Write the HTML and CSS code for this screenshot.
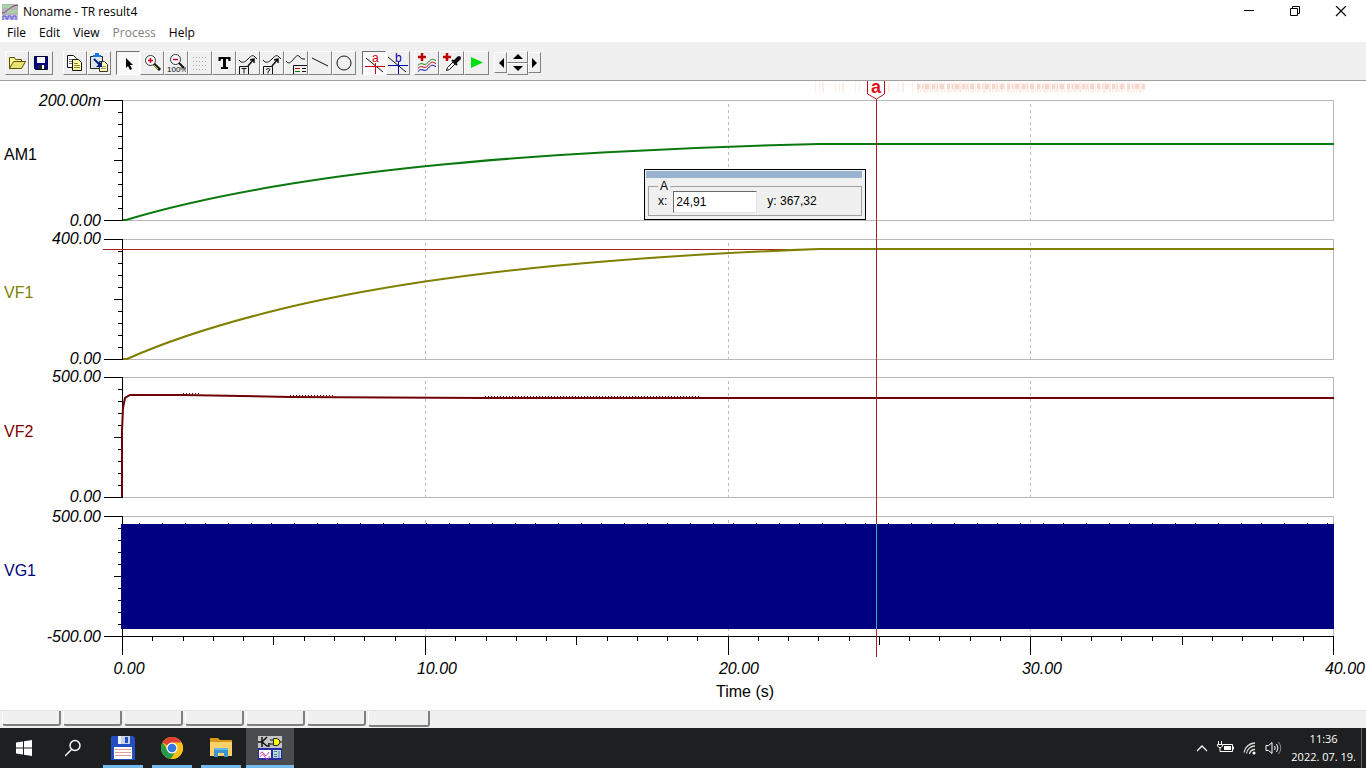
FILE: index.html
```html
<!DOCTYPE html>
<html lang="en">
<head>
<meta charset="utf-8">
<title>Noname - TR result4</title>
<link rel="stylesheet" href="styles.css">
</head>
<body>
<div class="app">
  <header class="titlebar">
    <svg class="app-icon" width="16" height="16" viewBox="0 0 16 16" aria-hidden="true"><path fill="#b5b5b5" d="M0 0h16v16H0z"/><path fill="#a9d3a4" d="M0 1h10v3H0zM5 6h11v3H5z"/><path d="M0 9c5 0 7-7 16-8" fill="none" stroke="#8a3f7a"/><path d="M0 11h16v5H0z" fill="#c9c5ee"/><path d="M1 16v-4h3v3h2v-3h3v3h2v-3h3v4" fill="none" stroke="#5b50c8"/></svg>
    <h1 class="title">Noname - TR result4</h1>
    <div class="window-controls">
      <button class="win-btn" aria-label="Minimize"><svg width="12" height="12"><path d="M1 4.500h10" stroke="#000"/></svg></button>
      <button class="win-btn" aria-label="Restore"><svg width="12" height="12" fill="none" stroke="#000"><path d="M1.500 2.500h7v7h-7zM3.500 2.500v-2h7v7h-2"/></svg></button>
      <button class="win-btn" aria-label="Close"><svg width="12" height="12"><path d="M1 0l10 10M11 0L1 10" stroke="#000" stroke-width="1.200"/></svg></button>
    </div>
  </header>
  <nav class="menubar" aria-label="Main menu">
    <button>File</button><button>Edit</button><button>View</button><button disabled>Process</button><button>Help</button>
  </nav>
  <div class="toolbar" role="toolbar" aria-label="Tools">
    <div class="group files">
      <button class="tool" aria-label="Open"><svg width="20" height="20"><path d="M2.500 15.500v-11h5l1 2h6v2" fill="#ffff9a" stroke="#5d5000"/><path d="M2.500 15.500l4-7h12l-4 7z" fill="#e8e270" stroke="#5d5000"/></svg></button>
      <button class="tool" aria-label="Save"><svg width="20" height="20"><path d="M3.500 3.500h13v13h-12l-1-1z" fill="#000090" stroke="#000030"/><path d="M6 4h8v6H6z" fill="#f4f4f4"/><path d="M7 12h7v4H7z" fill="#222"/><path d="M11 12h2v4h-2z" fill="#fff"/></svg></button>
    </div>
    <div class="group clip">
      <button class="tool" aria-label="Copy"><svg width="20" height="20"><path d="M2.500 2.500h6l3 3v9h-9z" fill="#fff" stroke="#111"/><path d="M4 6.500h4M4 8.500h4M4 10.500h3" stroke="#777"/><path d="M7.500 6.500h6l3 3v8h-9z" fill="#ffffa8" stroke="#111"/><path d="M9 10.500h4M9 12.500h6M9 14.500h6" stroke="#888830"/></svg></button>
      <button class="tool" aria-label="Paste"><svg width="20" height="20"><path d="M1.500 3.500h12v12h-12z" fill="#dfe6ee" stroke="#222"/><path d="M4 4V2h2V0h4v2h2v2z" fill="#1979e0"/><path d="M10.500 8.500h5l3 3v7h-8z" fill="#ffffa8" stroke="#333"/><path d="M12 13.500h5M12 15.500h5" stroke="#999"/><path d="M5 6l6 6" stroke="#002080" stroke-width="2"/><path d="M13 8v6H7z" fill="#002080"/></svg></button>
    </div>
    <div class="group draw">
      <button class="tool pressed" aria-label="Select"><svg width="20" height="20"><path d="M8 5v10l2-2 2 4 2-1-2-4h3z" fill="#000"/></svg></button>
      <button class="tool" aria-label="Zoom in"><svg width="20" height="20"><circle cx="8.500" cy="7.500" r="5" fill="#fff" stroke="#333"/><path d="M6 7.500h5M8.500 5v5" stroke="#d00022" stroke-width="1.500"/><path d="M12 11l6 6" stroke="#111" stroke-width="3"/><path d="M12 12l4 4" stroke="#dddd40"/></svg></button>
      <button class="tool" aria-label="Zoom 100%"><svg width="20" height="20"><circle cx="9.500" cy="6.500" r="5" fill="#fff" stroke="#333"/><path d="M7 6.500h5" stroke="#d00022" stroke-width="1.500"/><path d="M13 10l5 5" stroke="#111" stroke-width="2"/><text x="1" y="19" class="icon-tiny">100%</text></svg></button>
      <button class="tool" aria-label="Grid"><svg width="20" height="20"><path d="M3 4.500h14M3 8.500h14M3 12.500h14M3 16.500h14" stroke="#aaa" stroke-dasharray="1 2"/></svg></button>
      <button class="tool" aria-label="Text"><svg width="20" height="20"><path d="M4.500 4h12v4h-2l-.5-2h-2v8h2v2h-7v-2h2V6H7l-.5 2h-2z" fill="#000"/></svg></button>
      <button class="tool" aria-label="Curve label"><svg width="22" height="22" fill="none" stroke="#111"><path d="M2 8c3 4 6 2 9-1s4-4 6-3l3 3M2.500 22v-7.500h9V22M4.500 16.500h5M7 16.500v5"/><path d="M11 14l6-7m-4 1l4-1v4" stroke-width="1.500"/></svg></button>
      <button class="tool" aria-label="Curve query"><svg width="22" height="22" fill="none" stroke="#111"><path d="M2 8c3 4 6 2 9-1s4-4 6-3l3 3M2.500 22v-7.500h9V22M5 17.500q2-2 4 0 0 1-2 2v2"/><path d="M11 14l6-7m-4 1l4-1v4" stroke-width="1.500"/></svg></button>
      <button class="tool" aria-label="Legend"><svg width="22" height="22" fill="none" stroke="#111"><path d="M1 9c5 7 9-8 13-5 2 3 3 3 6 3M8.500 22v-8.500H22"/><path d="M10 16.500h5" stroke="#b00"/><path d="M10 19.500h5" stroke="#070"/><path d="M17 16.500h4M17 19.500h4"/></svg></button>
      <button class="tool" aria-label="Line"><svg width="20" height="20"><path d="M2 5l16 8" stroke="#111"/></svg></button>
      <button class="tool" aria-label="Circle"><svg width="20" height="20"><circle cx="10" cy="10" r="7" fill="none" stroke="#111"/></svg></button>
    </div>
    <div class="group cursors">
      <button class="tool pressed" aria-label="Cursor a"><svg width="22" height="22"><path d="M3 6l17 14" stroke="#111"/><path d="M2 14.500h20M12.500 11v11" stroke="#d00010"/><text x="9" y="10" class="icon-letter red">a</text></svg></button>
      <button class="tool" aria-label="Cursor b"><svg width="22" height="22"><path d="M1 5l18 15" stroke="#111"/><path d="M1 13.500h20M11.500 10v12" stroke="#0000a8"/><text x="8" y="10" class="icon-letter blue">b</text></svg></button>
    </div>
    <div class="group run">
      <button class="tool wide" aria-label="Add curve"><svg width="22" height="22" fill="none"><path d="M6 1v8M2 5h8" stroke="#b00" stroke-width="2.500"/><path d="M2 13.500c4-5 6 2 10-3s5-3 8-2" stroke="#188018"/><path d="M2 16.500c4-5 6 2 10-3s5-3 8-2" stroke="#c00010"/><path d="M2 19.500c4-5 6 2 10-3s5-3 8-2" stroke="#0000b0"/></svg></button>
      <button class="tool wide" aria-label="Pick curve"><svg width="22" height="22"><path d="M6 1v8M2 5h8" stroke="#b00" stroke-width="2.500"/><path d="M5.500 18.500l1-3 6-6 2 2-6 6z" fill="#fff" stroke="#111"/><path d="M11 8l5 5" stroke="#111" stroke-width="2"/><path d="M14 10l4-4" stroke="#111" stroke-width="4" stroke-linecap="round"/></svg></button>
      <button class="tool wide" aria-label="Run"><svg width="20" height="20"><path d="M4 4l12 5.500L4 15z" fill="#00e010"/></svg></button>
    </div>
    <div class="group scroll">
      <button class="tool slim" aria-label="Previous"><svg width="8" height="10"><path d="M7 0v10L2 5z"/></svg></button>
      <div class="spin">
        <button class="tool half" aria-label="Up"><svg width="10" height="6"><path d="M0 5h10L5 0z"/></svg></button>
        <button class="tool half" aria-label="Down"><svg width="10" height="6"><path d="M0 0h10L5 5z"/></svg></button>
      </div>
      <button class="tool slim" aria-label="Next"><svg width="8" height="10"><path d="M1 0v10l5-5z"/></svg></button>
    </div>
  </div>

  <main class="chart">
    <svg class="plot" viewBox="0 81 1366 629" role="img" aria-label="Transient analysis curves">
      <defs>
        <path id="axis" d="M104 .5h18M122.500 0v121M104 120.500h18M118 12.500h4M118 24.500h4M118 36.500h4M118 48.500h4M114 60.500h8M118 72.500h4M118 84.500h4M118 96.500h4M118 108.500h4"/>
        <path id="frame" d="M123 .5h1210.500v120H123"/>
        <path id="grid" d="M425.500 4v117M728.500 4v117M1030.500 4v117"/>
      </defs>
      <g class="ghost">
        <path d="M815 87.500h46" stroke-dasharray="1 3 1 2 2 11"/>
        <path d="M888 87.500h28" stroke-dasharray="2 8 1 3"/>
        <path d="M917 87.500h228" stroke-dasharray="2 1 1 2 3 1 1 1"/>
        <path class="ghost-mid" d="M917 86.500h228" stroke-dasharray="3 2 1 2 4 3"/>
      </g>
      <g class="frames">
        <use href="#frame" y="100"/><use href="#frame" y="239"/><use href="#frame" y="377"/><use href="#frame" y="516"/>
      </g>
      <g class="grids">
        <use href="#grid" y="100"/><use href="#grid" y="239"/><use href="#grid" y="377"/><use href="#grid" y="516"/>
      </g>
      <g class="axes">
        <use href="#axis" y="100"/><use href="#axis" y="239"/><use href="#axis" y="377"/><use href="#axis" y="516"/>
        <path d="M122 636.500h1212M122.500 636v19M425.500 636v19M728.500 636v19M1030.500 636v19M1333.500 636v19"/>
        <path d="M273.500 637v8M576.500 637v8M879.500 637v8M1182.500 637v8"/>
        <path d="M152.500 637v4M183.500 637v4M213.500 637v4M243.500 637v4M304.500 637v4M334.500 637v4M364.500 637v4M395.500 637v4M455.500 637v4M486.500 637v4M516.500 637v4M546.500 637v4M607.500 637v4M637.500 637v4M667.500 637v4M697.500 637v4M758.500 637v4M788.500 637v4M818.500 637v4M849.500 637v4M909.500 637v4M939.500 637v4M970.500 637v4M1000.500 637v4M1061.500 637v4M1091.500 637v4M1121.500 637v4M1152.500 637v4M1212.500 637v4M1242.500 637v4M1272.500 637v4M1303.500 637v4"/>
      </g>
      <rect class="level" x="103" y="249" width="685" height="1"/>
      <g class="curves">
        <path class="am1" d="M123 220h3C173 205.800 224 195.200 274 186.600S375 171.500 425 166.300 546 155.600 607 152.200 748 145.500 819 144H1334"/>
        <path class="vf1" d="M123 359h4C173 338.500 224 323.200 274 310.800S375 289.100 425 281.600 546 266.100 607 261.200 748 251.600 819 249H1334"/>
        <path class="vf2" d="M122 497V431L123 408 125 398 130 395H183L290 397 485 398H1334"/>
      </g>
      <path class="vf2-dots" d="M183 394.500h18M290 396.500h45M485 397.500h215"/>
      <path class="vg1" d="M121 524h1213v105H121z"/>
      <path class="vg1-dots" d="M139 523.500h1195"/>
      <path class="cursor" d="M876.500 99v558"/>
      <path class="cursor-inverse" d="M876.500 524v105"/>
      <path class="marker" d="M867.500 81v13l9 5 8-5V81"/>
      <text class="marker-text" x="876" y="93">a</text>
      <g class="y-label">
        <text x="101" y="106">200.00m</text><text x="101" y="226">0.00</text>
        <text x="101" y="244">400.00</text><text x="101" y="364">0.00</text>
        <text x="101" y="382">500.00</text><text x="101" y="502">0.00</text>
        <text x="101" y="522">500.00</text><text x="101" y="642">-500.00</text>
      </g>
      <g class="x-label">
        <text x="129" y="674">0.00</text><text x="437" y="674">10.00</text><text x="739" y="674">20.00</text><text x="1042" y="674">30.00</text><text x="1345" y="674">40.00</text>
      </g>
      <text class="axis-title" x="745" y="697">Time (s)</text>
      <g class="name">
        <text class="name-am1" x="4" y="160">AM1</text><text class="name-vf1" x="4" y="298">VF1</text><text class="name-vf2" x="4" y="437">VF2</text><text class="name-vg1" x="4" y="576">VG1</text>
      </g>
    </svg>
    <section class="readout" aria-label="Cursor A">
      <div class="readout-bar"></div>
      <fieldset class="readout-box">
        <legend>A</legend>
        <label for="cursor-x">x:</label>
        <input id="cursor-x" type="text" value="24,91">
        <span class="readout-y">y: 367,32</span>
      </fieldset>
    </section>
  </main>

  <div class="tabs" role="tablist">
    <button class="tab" role="tab" aria-label="Result 1"></button><button class="tab" role="tab" aria-label="Result 2"></button><button class="tab" role="tab" aria-label="Result 3"></button><button class="tab" role="tab" aria-label="Result 4"></button><button class="tab" role="tab" aria-label="Result 5"></button><button class="tab" role="tab" aria-label="Result 6"></button><button class="tab selected" role="tab" aria-selected="true" aria-label="Result 7"></button>
  </div>

  <footer class="taskbar">
    <button class="task" aria-label="Start"><svg width="18" height="18" fill="#fff"><path d="M0 3.500l7-1V8.500H0zM8 2.300L16 1v7.500H8zM0 9.500h7v6l-7-1zM8 9.500h8V17l-8-1.300z"/></svg></button>
    <button class="task" aria-label="Search"><svg width="18" height="18" fill="none" stroke="#fff" stroke-width="1.400"><circle cx="10" cy="6.500" r="5"/><path d="M6.500 10.500L0 17"/></svg></button>
    <button class="task open" aria-label="File manager"><svg width="24" height="24"><path d="M1 0h21l2 2v22H0V1z" fill="#244fc4"/><path d="M7 0h12v8H7z" fill="#c8d4e4"/><path d="M14 1h3v6h-3z" fill="#244fc4"/><path d="M7 0h3v8H7z" fill="#edf2fa"/><path d="M3 11h18v12H3z" fill="#fff"/><path d="M4 13.500h16M4 16.500h16M4 19.500h16" stroke="#e29a9a"/></svg></button>
    <button class="task open" aria-label="Chrome"><svg width="24" height="24"><circle cx="12" cy="12" r="11" fill="#fbc116"/><path d="M12 12L2.500 6.500A11 11 0 0 1 21.500 6.500z" fill="#de4034"/><path d="M2.500 6.500A11 11 0 0 0 11 23l5.500-9.500L7 13z" fill="#279a4b"/><path d="M12 6.500h9.500A11 11 0 0 1 11 23l6-9z" fill="#fbc116"/><circle cx="12" cy="12" r="5.500" fill="#fff"/><circle cx="12" cy="12" r="4.300" fill="#3478e5"/></svg></button>
    <button class="task open" aria-label="File Explorer"><svg width="24" height="22"><path d="M1 1h8l2 2h12v4H1z" fill="#d99a1c"/><path d="M1 5h22v14H1z" fill="#fbd267"/><path d="M5 20v-9h14v9h-4v-4H9v4z" fill="#3b95d0"/><path d="M5 11h14v2H5z" fill="#65b9e8"/></svg></button>
    <button class="task open active" aria-label="TINA"><svg width="24" height="24"><path d="M0 0h24v12H0z" fill="#c4c4c4"/><path d="M0 6h4M4 1v10M4 6l5-5M4 6l5 4M8 10h3V7" fill="none" stroke="#111" stroke-width="1.500"/><path d="M12 4h4M12 8h4M21 6h3" stroke="#111"/><path d="M15.500 2.500H19q3 1 3 3.500t-3 3.500h-3.500z" fill="#ff0" stroke="#222"/><path d="M0 12h24v12H0z" fill="#2828a0"/><path d="M1 14h12v8H1z" fill="#fff"/><path d="M2 18q2-4 4 0t5-2M2 21q3-5 5 0t5-1" fill="none" stroke="#c044b0"/><path d="M15 14h8v8h-8z" fill="#b8dcdc"/><path d="M16 15.500h3M16 18.500h3M16 20.500h3M21 15v7" stroke="#5070a8"/></svg></button>
    <div class="tray">
      <button class="tray-btn" aria-label="Show hidden icons"><svg width="12" height="8" fill="none" stroke="#fff" stroke-width="1.300"><path d="M1 7l5-5 5 5"/></svg></button>
      <button class="tray-btn" aria-label="Battery"><svg width="17" height="14" fill="none" stroke="#fff"><path d="M6 3.500h9.500v7H4.500M16.500 5.500v3M1.500 0v3M4.500 0v3M.5 3.500h5v1.500l-1.500 1.500H2L.5 5zM3 6.500v4h2"/><path d="M7 5h7v4H7z" fill="#fff" stroke="none"/></svg></button>
      <button class="tray-btn" aria-label="Network"><svg width="13" height="14" fill="none"><path d="M1 11.500A11 11 0 0 1 12 2M3.500 12.500A8.500 8.500 0 0 1 12 5M6.500 13A5.500 5.500 0 0 1 12 8.500" stroke="#ddd" stroke-width="1.300"/><circle cx="11" cy="12" r="1.500" fill="#fff"/></svg></button>
      <button class="tray-btn" aria-label="Volume"><svg width="17" height="14" fill="none" stroke="#fff"><path d="M1 4.500h2.500l3.500-3v11l-3.500-3H1zM9.500 5q1.500 2 0 4M11.500 3q3 4 0 8"/><path d="M13.500 1q4.500 6 0 12" stroke="#888"/></svg></button>
      <button class="clock"><time>11:36</time><time>2022. 07. 19.</time></button>
      <span class="peek"></span>
    </div>
  </footer>
</div>
</body>
</html>
```
FILE: styles.css
```css
* { box-sizing: border-box; }
body { margin: 0; background: #fff; color: #000; font-family: "Open Sans", "Noto Sans", sans-serif; font-size: 12px; }
button { margin: 0; padding: 0; border: 0; background: none; font: inherit; color: inherit; }
svg { display: block; flex: none; }

.app { display: flex; flex-direction: column; min-height: 100vh; }

.titlebar { display: flex; align-items: center; height: 23px; padding: 0 2px; }
.title { margin: 0 0 0 5px; font-size: 12px; line-height: 16px; font-weight: 400; }
.window-controls { display: flex; margin-left: auto; }
.win-btn { display: flex; align-items: center; justify-content: center; width: 46px; height: 20px; }

.menubar { display: flex; gap: 13px; height: 19px; padding: 0 7px; }
.menubar button { line-height: 20px; }
.menubar button:disabled { color: #808080; }

.toolbar { display: flex; align-items: center; height: 39px; padding: 3px 5px 0; background: #f0f0f0; border-bottom: 1px solid #a0a0a0; }
.group { display: flex; }
.files { margin-right: 10px; }
.clip { margin-right: 5px; }
.draw { margin-right: 6px; }
.cursors { margin-right: 4px; }
.run { margin-right: 5px; }
.tool { display: flex; align-items: center; justify-content: center; width: 24px; height: 24px; background: #f0f0f0; border: 1px solid; border-color: #fff #808080 #808080 #fff; }
.tool.pressed { background: #f9f9f9; border-color: #707070 #fff #fff #707070; }
.tool.wide { width: 25px; }
.tool.slim { width: 13px; height: 21px; align-self: center; }
.spin { display: flex; flex-direction: column; }
.tool.half { width: 21px; height: 12px; }
.icon-tiny { font: 8px "Liberation Sans", sans-serif; }
.icon-letter { font: 12px "Liberation Sans", sans-serif; }
.red { fill: #d00010; }
.blue { fill: #0000a8; }

.chart { position: relative; flex: 1; }
.plot { width: 100%; height: auto; overflow: visible; font-family: "Liberation Sans", Arial, sans-serif; font-size: 16px; }
.frames { fill: none; stroke: #b8b8bc; }
.grids { fill: none; stroke: #bcbcbc; stroke-dasharray: 3 3; }
.axes { fill: none; stroke: #000; }
.curves { fill: none; stroke-width: 2; }
.am1 { stroke: #0a780f; }
.vf1 { stroke: #808000; }
.vf2 { stroke: #700008; }
.vf2-dots { fill: none; stroke: #700008; stroke-dasharray: 1 2; transform: translateY(-1px); }
.vg1 { fill: #000080; }
.vg1-dots { fill: none; stroke: #000; stroke-dasharray: 1 22 1 22 1 19; }
.level { fill: #b02020; }
.cursor { fill: none; stroke: #b02020; }
.cursor-inverse { fill: none; stroke: #35b8a0; }
.marker { fill: #fff; stroke: #b8141c; }
.marker-text { fill: #dc1018; font-size: 18px; font-weight: 700; text-anchor: middle; }
.ghost { stroke: #fcece4; stroke-width: 10; }
.ghost-mid { stroke: #f8d6d0; stroke-width: 5; }
.y-label { font-style: italic; text-anchor: end; }
.x-label { font-style: italic; text-anchor: middle; }
.axis-title { text-anchor: middle; }
.name-vf1 { fill: #808000; }
.name-vf2 { fill: #800000; }
.name-vg1 { fill: #000080; }

.readout { position: absolute; left: 644px; top: 88px; width: 222px; padding: 1px 3px 3px 1px; background: #f0f0f0; border: 1px solid #000; font: 12px/20px "Liberation Sans", Arial, sans-serif; }
.readout-bar { height: 7px; background: #99b4d1; }
.readout-box { display: flex; align-items: flex-start; min-width: 0; height: 35px; margin: 3px 0 0 2px; padding: 0 9px; border: 1px solid #a0a0a0; }
.readout-box legend { padding: 0 2px; line-height: 10px; }
.readout-box input { width: 84px; height: 22px; margin: 0 10px 0 6px; padding: 0 2px; border: 1px solid; border-color: #696969 #e3e3e3 #e3e3e3 #696969; background: #fff; font: inherit; }

.tabs { display: flex; gap: 2px; height: 18px; padding: 0 2px; background: #f0f0f0; border-top: 1px solid #e3e3e3; }
.tab { width: 59px; height: 15px; border: solid; border-width: 0 2px 2px 1px; border-color: #fff #808080 #808080 #fff; border-radius: 0 0 3px 3px; }
.tab.selected { width: 62px; height: 16px; }

.taskbar { display: flex; gap: 1px; height: 40px; padding-left: 1px; background: #1e1f20; color: #fff; }
.task { display: flex; align-items: center; justify-content: center; width: 48px; border: solid transparent; border-width: 3px 0; }
.task.open { background: linear-gradient(#76b9ed, #76b9ed) bottom / 40px 3px no-repeat border-box; }
.task.active { background: linear-gradient(#76b9ed, #76b9ed) bottom / 48px 3px no-repeat border-box, #4b4c4d; }
.tray { display: flex; align-items: center; gap: 9px; margin-left: auto; padding-right: 4px; }
.clock { display: flex; flex-direction: column; align-items: center; font-size: 11px; line-height: 18px; }
.peek { width: 1px; height: 40px; margin-left: -4px; background: #606060; }
```
